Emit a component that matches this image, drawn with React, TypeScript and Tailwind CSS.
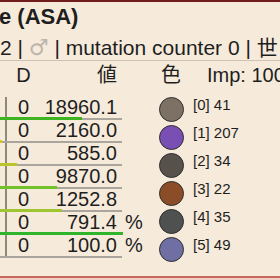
const rows = [
  { d: 0, v: "18960.1", pct: false, bar: 82, barColor: "bg-[#3cb521]" },
  { d: 0, v: "2160.0", pct: false, bar: 2, barColor: "bg-[#d6c81e]" },
  { d: 0, v: "585.0", pct: false, bar: 17, barColor: "bg-[#b9c52b]" },
  { d: 0, v: "9870.0", pct: false, bar: 57, barColor: "bg-[#72c22a]" },
  { d: 0, v: "1252.8", pct: false, bar: 62, barColor: "bg-[#9fc532]" },
  { d: 0, v: "791.4", pct: true, bar: 123, barColor: "bg-[#2fb52c]" },
  { d: 0, v: "100.0", pct: true, bar: 0, barColor: "" },
];

const swatches = [
  { idx: 0, val: 41, color: "bg-[#7d7166]" },
  { idx: 1, val: 207, color: "bg-[#7a4fb3]" },
  { idx: 2, val: 34, color: "bg-[#57514b]" },
  { idx: 3, val: 22, color: "bg-[#8b4d28]" },
  { idx: 4, val: 35, color: "bg-[#4f5050]" },
  { idx: 5, val: 49, color: "bg-[#6f6fa3]" },
];

export default function App() {
  return (
    <div className="w-[280px] h-[280px] overflow-hidden bg-[#f6eadb] border-t-2 border-[#6e1c1c] flex flex-col text-[#1e1e1e] font-['Liberation_Sans','Noto_Sans_CJK_JP',sans-serif]">
      {/* Title */}
      <div className="text-[22px] font-bold leading-[26px] mt-[2px] -ml-[1px] whitespace-nowrap">e (ASA)</div>
      <div className="text-[21px] leading-[25px] h-[25px] mt-[5px] whitespace-nowrap">
        2 | <span className="font-['DejaVu_Sans'] text-[22px] leading-[20px] text-[#bdb5ab]">♂</span> | mutation counter 0 | 世
      </div>
      <div className="h-px bg-[#cbc3b7]" />

      <div className="flex">
        {/* Values */}
        <div className="w-[150px] shrink-0 text-[20px]">
          <div className="flex h-[28px] leading-[28px]">
            <div className="w-[7px]" />
            <div className="w-[33px] text-center">D</div>
            <div className="w-[77px] text-right">値</div>
          </div>
          <div className="mt-[8px]">
            {rows.map((r, i) => (
              <div key={i} className="flex h-[23px] leading-[21px]">
                <div className="relative w-[122px] flex border-b-2 border-[#aaa59d]">
                  <div className="w-[7px] border-r-2 border-[#8d8880]" />
                  <div className="w-[33px] text-center">{r.d}</div>
                  <div className="flex-1 text-right pr-[5px]">{r.v}</div>
                  {r.bar > 0 && (
                    <div
                      className={`absolute left-0 bottom-[-2px] h-[3px] ${r.barColor}`}
                      style={{ width: r.bar }}
                    />
                  )}
                </div>
                <div className="pl-[3px]">{r.pct ? "%" : ""}</div>
              </div>
            ))}
          </div>
        </div>

        {/* Colours */}
        <div className="flex-1">
          <div className="flex h-[28px] leading-[28px] text-[20px] whitespace-nowrap">
            <div className="w-[42px] text-center">色</div>
            <div className="ml-[15px]">Imp: 100</div>
          </div>
          <div className="mt-[6px]">
            {swatches.map((s) => (
              <div key={s.idx} className="flex items-center h-[28px]">
                <div className="w-[42px] flex justify-center">
                  <div className={`w-[25px] h-[25px] rounded-full border-[1.5px] border-[#2f2f2f] ${s.color}`} />
                </div>
                <div className="ml-[1px] mb-[9px] text-[15px] leading-[18px] whitespace-nowrap">
                  [{s.idx}] {s.val}
                </div>
              </div>
            ))}
          </div>
        </div>
      </div>

      <div className="mt-auto h-[2px] bg-[#c8675c]" />
      <div className="h-[2px] bg-[#f0cfc5]" />
    </div>
  );
}
